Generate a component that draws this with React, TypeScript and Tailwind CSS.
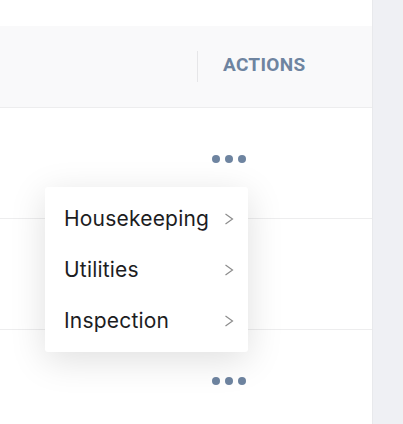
const rows = [0, 1, 2];
const menu = ["Housekeeping", "Utilities", "Inspection"];

function Dots() {
  return (
    <div className="flex gap-[5px]">
      <span className="h-2 w-2 rounded-full bg-[#6e84a0]" />
      <span className="h-2 w-2 rounded-full bg-[#6e84a0]" />
      <span className="h-2 w-2 rounded-full bg-[#6e84a0]" />
    </div>
  );
}

export default function App() {
  return (
    <div className="relative flex h-[424px] w-[403px] overflow-hidden font-['Roboto',sans-serif]">
      {/* table panel */}
      <div className="w-[373px] shrink-0 border-r border-[#e8e9ec] bg-white">
        <div className="h-[26px]" />
        <div className="flex h-[82px] items-center border-b border-[#ededee] bg-[#f9f9fa]">
          <div className="ml-[197px] h-[31px] w-px bg-[#e6e6e8]" />
          <span className="ml-[25px] -mt-[3px] text-[19px] font-bold tracking-[0.3px] text-[#6e84a0]">
            ACTIONS
          </span>
        </div>
        {rows.map((r) => (
          <div key={r} className="h-[111px] border-b border-[#ededee] pl-[212px] pt-[47px]">
            <Dots />
          </div>
        ))}
      </div>
      <div className="flex-1 bg-[#eff0f4]" />

      {/* dropdown menu */}
      <div className="absolute left-[45px] top-[187px] w-[203px] rounded-[3px] bg-white py-[6px] font-['Inter',sans-serif] shadow-[0_8px_36px_rgba(0,0,0,0.13)]">
        {menu.map((m) => (
          <div key={m} className="flex h-[51px] items-center justify-between pl-[19px] pr-[14px]">
            <span className="text-[21px] tracking-[0.2px] text-[#1d1d1f]">{m}</span>
            <svg width="10" height="12" viewBox="0 0 10 12" fill="none">
              <path d="M1.5 1 L8.5 6 L1.5 11" stroke="#8c8c8c" strokeWidth="1.2" />
            </svg>
          </div>
        ))}
      </div>
    </div>
  );
}
